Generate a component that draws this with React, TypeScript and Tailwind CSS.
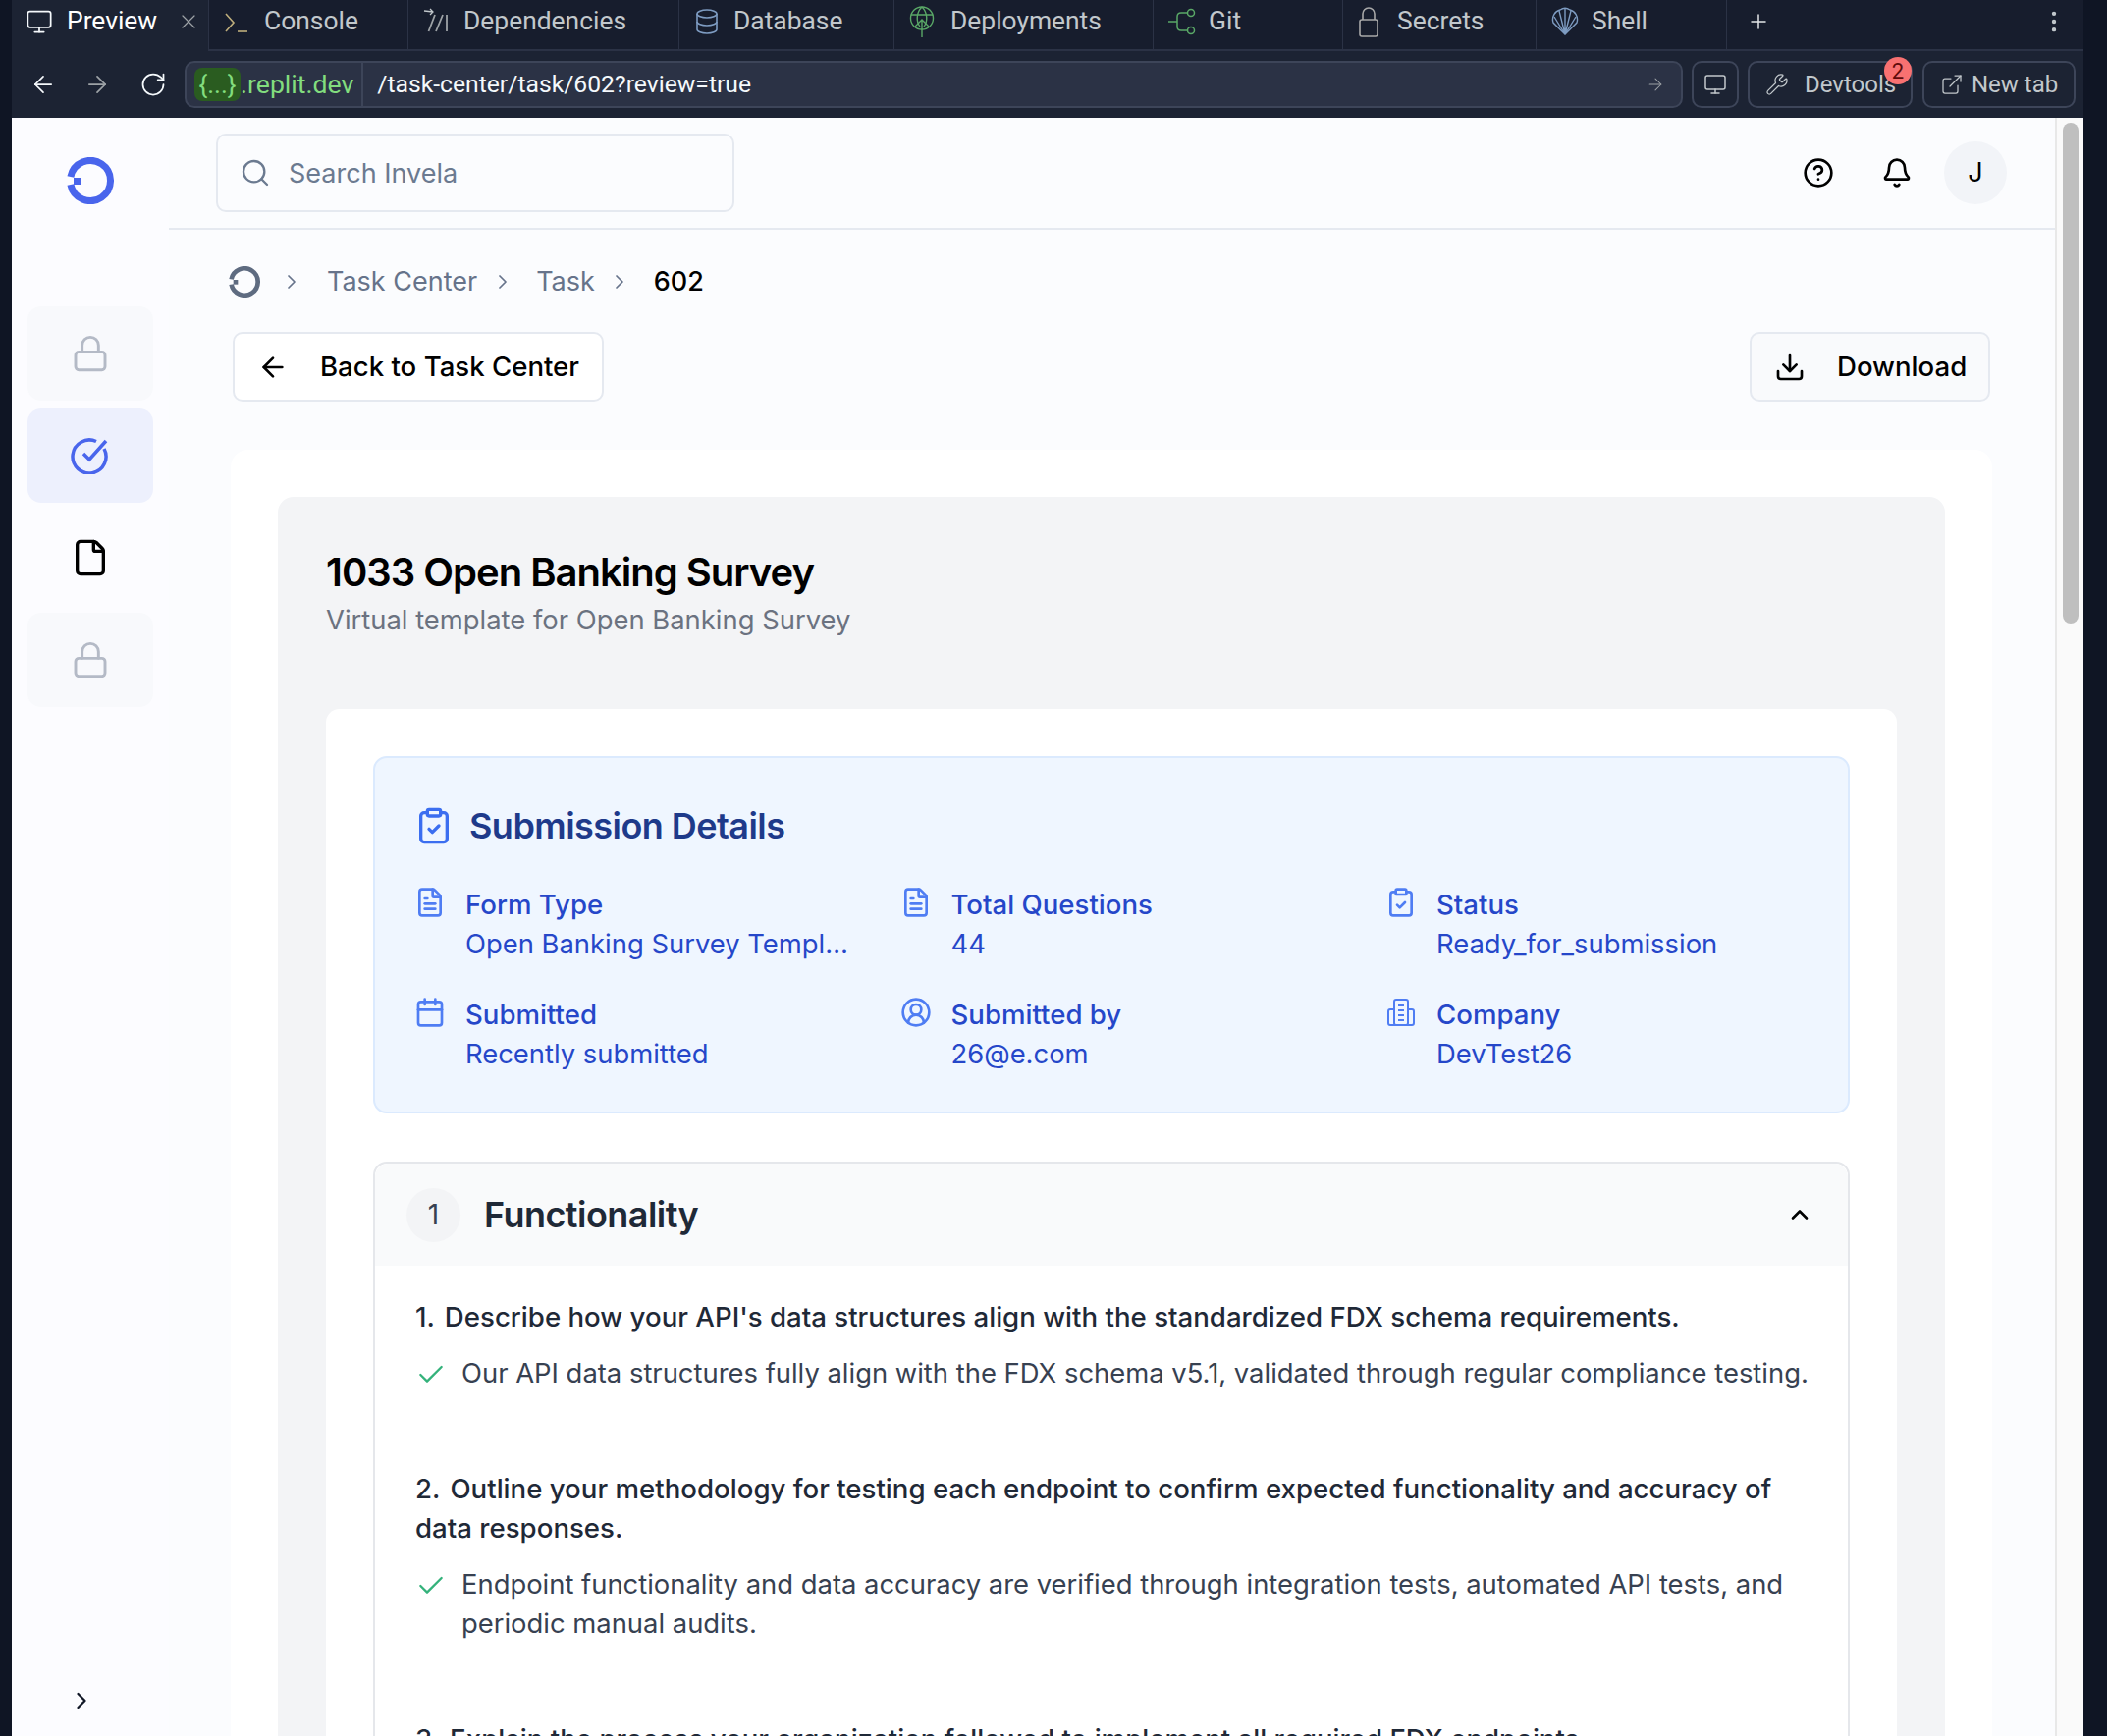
import React from 'react';
import {
  ArrowLeft,
  ArrowRight,
  Bell,
  Calendar,
  Check,
  ChevronRight,
  ChevronUp,
  CircleHelp,
  CircleUserRound,
  ClipboardCheck,
  Download,
  ExternalLink,
  File,
  FileText,
  Lock,
  Monitor,
  MoreVertical,
  Plus,
  RotateCw,
  Search,
  Wrench,
  X,
} from 'lucide-react';

const InvelaLogo = ({ className }: { className: string }) => (
  <svg viewBox="0 0 48 48" fill="none" className={className}>
    <path d="M3.900 20A20.500 20.500 0 1 1 3.900 28" stroke="currentColor" strokeWidth="7" />
    <rect x="7" y="21" width="7" height="7" fill="currentColor" />
  </svg>
);

const ConsoleIcon = () => (
  <svg viewBox="0 0 28 28" fill="none" className="w-7 h-7">
    <path d="M3 6l8 9-8 9" stroke="#bfae7c" strokeWidth="1.6" />
    <path d="M15 24h10" stroke="#bfae7c" strokeWidth="1.6" />
  </svg>
);

const DepsIcon = () => (
  <svg viewBox="0 0 28 28" fill="none" className="w-7 h-7">
    <path d="M2 3l9 1M8 1l3 3-3 3" stroke="#c2c8cc" strokeWidth="1.3" />
    <path d="M13 7L6.500 24M21 7l-7 17M25 7v17" stroke="#9da2a6" strokeWidth="1.8" />
  </svg>
);

const DatabaseIcon = () => (
  <svg viewBox="0 0 28 28" fill="none" stroke="#7e9cc2" strokeWidth="1.6" className="w-7 h-7">
    <ellipse cx="14" cy="6" rx="10" ry="4" />
    <path d="M4 6v16c0 2.200 4.500 4 10 4s10-1.800 10-4V6" />
    <path d="M4 14c0 2.200 4.500 4 10 4s10-1.800 10-4" />
  </svg>
);

const DeployIcon = () => (
  <svg viewBox="0 0 28 32" fill="none" stroke="#5aa867" strokeWidth="1.4" className="w-7 h-8">
    <circle cx="14" cy="12.500" r="11.500" />
    <path d="M3 9h22M14 1c-6 6-6 15-2 20M14 1c6 6 6 15 2 20" />
    <path d="M14 32V14M7 21l7-7 7 7" />
  </svg>
);

const GitIcon = () => (
  <svg viewBox="0 0 30 28" fill="none" stroke="#5aa867" strokeWidth="1.5" className="w-[30px] h-7">
    <path d="M1 14h9M10 14V9c0-2.500 1.500-4 4-4h6.500M10 14v5c0 2.500 1.500 4 4 4h6.500" />
    <circle cx="24" cy="5" r="3.500" />
    <circle cx="24" cy="23" r="3.500" />
  </svg>
);

const SecretsIcon = () => (
  <svg viewBox="0 0 24 32" fill="none" stroke="#a8a8a8" strokeWidth="1.6" className="w-6 h-8">
    <rect x="3" y="14" width="18" height="17" rx="2" />
    <path d="M6 14V8a6 6 0 0 1 12 0v6" />
  </svg>
);

const ShellIcon = () => (
  <svg viewBox="0 0 30 30" fill="none" stroke="#7e9cc2" strokeWidth="1.400" className="w-[30px] h-[30px]">
    <path d="M15 28L3 16C1 10 5 4 10 3c3-2 7-2 10 0 5 1 9 7 7 13L15 28z" />
    <path d="M15 28L9 4M15 28V2M15 28l6-24M15 28L4 10M15 28l11-18" />
  </svg>
);

const CompanyIcon = ({ className, strokeWidth }: { className?: string; strokeWidth?: number }) => (
  <svg viewBox="0 0 32 32" fill="none" stroke="currentColor" strokeWidth={strokeWidth} className={className}>
    <rect x="9" y="3" width="14" height="26" rx="2" />
    <path d="M9 13H5a2 2 0 0 0-2 2v12a2 2 0 0 0 2 2h22a2 2 0 0 0 2-2V15a2 2 0 0 0-2-2h-4" />
    <path d="M13 9h6M13 14h6M13 19h6M13 24h6" />
  </svg>
);

const tabs = [
  { label: 'Console', icon: <ConsoleIcon />, width: 'w-[203px]', gap: 'gap-[14px]' },
  { label: 'Dependencies', icon: <DepsIcon />, width: 'w-[276px]', gap: 'gap-[14px]' },
  { label: 'Database', icon: <DatabaseIcon />, width: 'w-[219px]', gap: 'gap-[13px]' },
  { label: 'Deployments', icon: <DeployIcon />, width: 'w-[264px]', gap: 'gap-[15px]' },
  { label: 'Git', icon: <GitIcon />, width: 'w-[193px]', gap: 'gap-3' },
  { label: 'Secrets', icon: <SecretsIcon />, width: 'w-[197px]', gap: 'gap-[17px]' },
  { label: 'Shell', icon: <ShellIcon />, width: 'w-[194px]', gap: 'gap-3' },
];

const TabBar = () => (
  <div className="flex h-[52px] shrink-0 text-[26.400px] text-[#c2c8cc] font-['Roboto',sans-serif]">
    <div className="flex w-[200px] items-center bg-[#1c2333] pb-2 pl-[14px] text-white">
      <Monitor className="w-7 h-7 text-[#f5f9fc]" strokeWidth={1.5} />
      <span className="ml-[14px]">Preview</span>
      <X className="ml-auto mr-2 w-6 h-6 text-[#9da2a6]" strokeWidth={1.25} />
    </div>
    {tabs.map((t) => (
      <div
        key={t.label}
        className={`flex ${t.width} items-center ${t.gap} pb-[6px] pl-[14px] border-l border-[#2b3245] border-b-2 border-b-[#2b3245] bg-[#171d2d]`}
      >
        {t.icon}
        <span>{t.label}</span>
      </div>
    ))}
    <div className="flex flex-1 items-center pb-[6px] pl-[20px] pr-[16px] justify-between border-l border-[#2b3245] bg-[#171d2d] border-b-2 border-b-[#2b3245]">
      <Plus className="w-6 h-6 text-[#e4e6e8]" strokeWidth={1.5} />
      <MoreVertical className="w-7 h-7 text-[#c2c8cc]" strokeWidth={1.75} />
    </div>
  </div>
);

const AddressBar = () => (
  <div className="flex h-[68px] shrink-0 items-center bg-[#1c2333] pl-[18px] pr-2 text-[24px] font-['Roboto',sans-serif]">
    <ArrowLeft className="w-7 h-7 text-[#f5f9fc]" strokeWidth={1.5} />
    <ArrowRight className="ml-[27px] w-7 h-7 text-[#9da2a6]" strokeWidth={1.5} />
    <RotateCw className="ml-[29px] w-7 h-7 text-[#f5f9fc]" strokeWidth={1.5} />
    <div className="ml-[18px] flex h-12 w-[1526px] items-center rounded-[10px] border-2 border-[#3d4559] bg-[#2b3245]">
      <span className="ml-2 flex h-[34px] w-[47px] items-center justify-center rounded-[8px] bg-[#2a5c20] text-[26px] text-[#82dd7e]">
        {'{...}'}
      </span>
      <span className="text-[26.600px] text-[#82dd7e]">.replit.dev</span>
      <div className="ml-2 h-full w-[2px] bg-[#3d4559]" />
      <span className="ml-[14px] text-[24.700px] text-[#f5f9fc]">/task-center/task/602?review=true</span>
      <ArrowRight className="ml-auto mr-4 w-5 h-5 text-[#9da2a6]" strokeWidth={1.25} />
    </div>
    <div className="ml-[9px] flex h-12 w-12 items-center justify-center rounded-[10px] border-2 border-[#3d4559]">
      <Monitor className="w-6 h-6 text-[#c2c8cc]" strokeWidth={1.5} />
    </div>
    <div className="relative ml-[9px] flex h-12 w-[168px] items-center rounded-[10px] border-2 border-[#3d4559] pl-[16px] text-[#c2c8cc]">
      <Wrench className="w-6 h-6" strokeWidth={1.25} />
      <span className="ml-[16px]">Devtools</span>
      <span className="absolute -top-[6px] -right-[1px] flex h-7 w-7 items-center justify-center rounded-full bg-[#f87171] text-[22px] text-[#5f0b0b]">
        2
      </span>
    </div>
    <div className="ml-[10px] flex h-12 w-[156px] items-center rounded-[10px] border-2 border-[#3d4559] pl-[16px] text-[#c2c8cc]">
      <ExternalLink className="w-6 h-6" strokeWidth={1.25} />
      <span className="ml-[8px]">New tab</span>
    </div>
  </div>
);

const Sidebar = () => (
  <aside className="flex w-[160px] shrink-0 flex-col items-center bg-[#fcfcff]">
    <div className="flex h-[128px] items-center">
      <InvelaLogo className="w-12 h-12 text-[#4965ec]" />
    </div>
    <div className="mt-[64px] flex w-[128px] flex-col gap-[8px]">
      <div className="flex h-24 items-center justify-center rounded-[14px] bg-[#f8f9fc]">
        <Lock className="w-10 h-10 text-[#b4bac6]" strokeWidth={1.75} />
      </div>
      <div className="flex h-24 items-center justify-center rounded-[14px] bg-[#edf0fd]">
        <svg viewBox="0 0 40 40" fill="none" stroke="#4965ec" strokeWidth="3.500" className="mb-[2px] w-10 h-10">
          <path d="M34 14a17 17 0 1 1-8-7.500" />
          <path d="M13 19l6 6L36 6" />
        </svg>
      </div>
      <div className="flex h-24 items-center justify-center">
        <File className="w-10 h-10 text-black" strokeWidth={2} />
      </div>
      <div className="flex h-24 items-center justify-center rounded-[14px] bg-[#f8f9fc]">
        <Lock className="w-10 h-10 text-[#b4bac6]" strokeWidth={1.75} />
      </div>
    </div>
    <ChevronRight className="mt-auto mb-[22px] mr-[18px] w-7 h-7 text-[#111827]" strokeWidth={2} />
  </aside>
);

const Header = () => (
  <header className="flex h-[114px] shrink-0 items-center justify-between border-b-2 border-[#e5e9f0] pl-[48px] pr-[49px]">
    <div className="flex h-[80px] w-[528px] items-center rounded-[10px] border-2 border-[#e5e9f0] pl-[22px] text-[27px] text-[#6b7a90]">
      <Search className="w-[32px] h-[32px]" strokeWidth={1.75} />
      <span className="ml-[18px] pt-[2px]">Search Invela</span>
    </div>
    <div className="flex items-center text-black">
      <CircleHelp className="w-8 h-8" strokeWidth={2} />
      <Bell className="ml-[48px] w-8 h-8" strokeWidth={2} />
      <div className="ml-[32px] flex h-16 w-16 items-center justify-center rounded-full bg-[#f2f4f8] text-[27px]">J</div>
    </div>
  </header>
);

const Breadcrumb = () => (
  <div className="flex h-[36px] items-center text-[27px] text-[#66738a]">
    <InvelaLogo className="w-8 h-8 ml-[-2px] text-[#5e6b80]" />
    <ChevronRight className="ml-[20px] w-6 h-6" strokeWidth={1.75} />
    <span className="ml-[24px]">Task Center</span>
    <ChevronRight className="ml-[14px] w-6 h-6" strokeWidth={1.75} />
    <span className="ml-[22px]">Task</span>
    <ChevronRight className="ml-[13px] w-6 h-6" strokeWidth={1.75} />
    <span className="ml-[23px] font-medium text-black">602</span>
  </div>
);

const details = [
  { label: 'Form Type', value: 'Open Banking Survey Templ\u2026', Icon: FileText },
  { label: 'Total Questions', value: '44', Icon: FileText },
  { label: 'Status', value: 'Ready_for_submission', Icon: ClipboardCheck },
  { label: 'Submitted', value: 'Recently submitted', Icon: Calendar },
  { label: 'Submitted by', value: '26@e.com', Icon: CircleUserRound },
  { label: 'Company', value: 'DevTest26', Icon: CompanyIcon },
];

const SubmissionDetails = () => (
  <section className="h-[364px] rounded-[14px] border-2 border-[#dbeafe] bg-[#eff6ff] pl-[42px] pt-[45px]">
    <div className="flex h-[48px] items-center">
      <ClipboardCheck className="-ml-[2px] w-[40px] h-[40px] text-[#3b6ef0]" strokeWidth={2} />
      <h2 className="ml-[16px] text-[36px] tracking-[-0.015em] font-semibold text-[#1e3a8a]">Submission Details</h2>
    </div>
    <div className="mt-[36px] grid grid-cols-[494.500px_494.500px_1fr] gap-y-[32px]">
      {details.map(({ label, value, Icon }) => (
        <div key={label} className="flex">
          <Icon className="w-[32px] h-[32px] shrink-0 -ml-[2px] mt-[2px] text-[#4f7df3]" strokeWidth={2} />
          <div className="ml-[20px] text-[#2547c9]">
            <div className="text-[27.600px] leading-[40px] font-medium">{label}</div>
            <div className="text-[27.400px] leading-[40px]">{value}</div>
          </div>
        </div>
      ))}
    </div>
  </section>
);

const questions = [
  {
    n: '1.',
    q: "Describe how your API's data structures align with the standardized FDX schema requirements.",
    a: 'Our API data structures fully align with the FDX schema v5.1, validated through regular compliance testing.',
  },
  {
    n: '2.',
    q: 'Outline your methodology for testing each endpoint to confirm expected functionality and accuracy of data responses.',
    a: 'Endpoint functionality and data accuracy are verified through integration tests, automated API tests, and periodic manual audits.',
  },
  {
    n: '3.',
    q: 'Explain the process your organization followed to implement all required FDX endpoints.',
    a: '',
  },
];

const Functionality = () => (
  <section className="mt-[49px] rounded-t-[14px] border-2 border-[#e5e7eb]">
    <div className="flex h-[104px] items-center rounded-t-[14px] bg-[#f9fafb] pl-[32px] pr-[35px]">
      <div className="flex h-[55px] w-[55px] items-center justify-center rounded-full bg-[#f3f4f6] text-[28px] text-[#374151]">1</div>
      <h3 className="ml-[24px] text-[36px] tracking-[-0.015em] font-semibold text-[#1f2937]">Functionality</h3>
      <ChevronUp className="ml-auto w-7 h-7 text-black" strokeWidth={2.25} />
    </div>
    <div className="flex flex-col gap-[78px] pl-[41px] pr-[30px] pt-[32px]">
      {questions.map((item) => (
        <div key={item.n}>
          <p className="text-[27.640px] leading-[40px] font-medium text-[#1f2937]">
            {item.n}
            <span className="ml-[10px]">{item.q}</span>
          </p>
          {item.a && (
            <div className="mt-[17px] flex">
              <Check className="mt-[6px] w-[32px] h-[32px] shrink-0 text-[#34b27b]" strokeWidth={1.75} />
              <p className="ml-[15px] text-[27.400px] leading-[40px] text-[#374151]">{item.a}</p>
            </div>
          )}
        </div>
      ))}
    </div>
  </section>
);

export default function App() {
  return (
    <div className="flex h-[1768px] w-[2146px] overflow-hidden bg-[#0f1524] font-['Inter',sans-serif]">
      <div className="w-3 shrink-0" />
      <div className="flex w-[2110px] flex-col">
        <TabBar />
        <AddressBar />
        <div className="flex min-h-0 flex-1 bg-[#fbfcfe]">
          <Sidebar />
          <main className="flex min-w-0 flex-1 flex-col">
            <Header />
            <div className="min-h-0 flex-1 overflow-hidden pl-[63px] pr-[64px]">
              <div className="mt-[35px]">
                <Breadcrumb />
              </div>
              <div className="mt-[33px] flex justify-between px-[2px]">
                <button className="flex h-[71px] w-[378px] items-center rounded-[10px] border-2 border-[#e5e9f0] bg-white pl-[23px] text-[27.600px] font-medium text-black">
                  <ArrowLeft className="w-8 h-8" strokeWidth={2} />
                  <span className="ml-[32px]">Back to Task Center</span>
                </button>
                <button className="flex h-[71px] w-[245px] items-center rounded-[10px] border-2 border-[#e5e9f0] bg-[#f9fafc] pl-[23px] text-[27.600px] font-medium text-black">
                  <Download className="w-8 h-8" strokeWidth={2} />
                  <span className="ml-[32px]">Download</span>
                </button>
              </div>
              <div className="mt-[49px] rounded-t-[18px] bg-white px-[48px] pt-[48px]">
                <div className="rounded-t-[16px] bg-[#f3f4f6] px-[49px] pt-[52px]">
                  <h1 className="text-[40px] tracking-[-0.025em] leading-[50px] font-semibold text-black">1033 Open Banking Survey</h1>
                  <p className="mt-[3px] text-[27.400px] leading-[40px] text-[#6b7280]">Virtual template for Open Banking Survey</p>
                  <div className="mt-[71px] rounded-t-[14px] bg-white px-[48px] pt-[48px]">
                    <SubmissionDetails />
                    <Functionality />
                  </div>
                </div>
              </div>
            </div>
          </main>
          <div className="flex w-[29px] shrink-0 justify-center border-l-2 border-[#e8e8e8] bg-[#fafafa] pt-[5px]">
            <div className="h-[510px] w-[16px] rounded-full bg-[#bfbfbf]" />
          </div>
        </div>
      </div>
      <div className="flex-1" />
    </div>
  );
}
